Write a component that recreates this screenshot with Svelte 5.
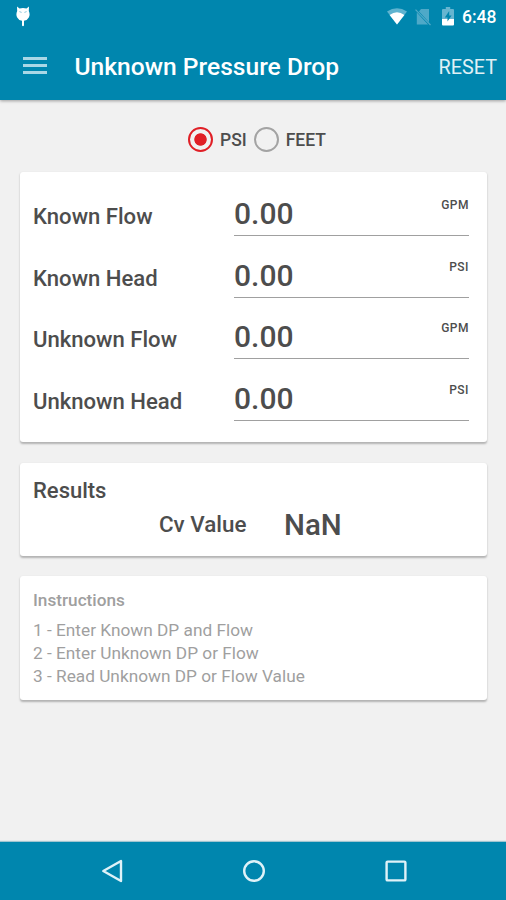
<script>
    let unit = 'PSI';
    let fields = [
        { label: 'Known Flow', value: '0.00', head: false },
        { label: 'Known Head', value: '0.00', head: true },
        { label: 'Unknown Flow', value: '0.00', head: false },
        { label: 'Unknown Head', value: '0.00', head: true }
    ];

    const steps = [
        '1 - Enter Known DP and Flow',
        '2 - Enter Unknown DP or Flow',
        '3 - Read Unknown DP or Flow Value'
    ];

    // 1 psi = 2.31 ft of water
    $: head = parseFloat(fields[1].value) / (unit === 'FEET' ? 2.31 : 1);
    $: cv = (parseFloat(fields[0].value) / Math.sqrt(head)).toFixed(2);

    function reset() {
        fields = fields.map((f) => ({ ...f, value: '0.00' }));
    }
</script>

<div class="screen">
    <header>
        <div class="status">
            <svg class="bug" width="14" height="21" viewBox="0 0 14 21">
                <path d="M1 0.5 L3.5 2.6 Q7 1.4 10.5 2.6 L13 0.5 L12.8 5 Q14.4 8.5 12.8 11.5 Q11.3 14.4 8 14.8 V19.5 Q7 21 6 19.5 V14.8 Q2.7 14.4 1.2 11.5 Q-0.4 8.5 1.2 5 Z" fill="#fff" />
                <path d="M3.4 5.6 L5.6 6.4 M10.6 5.6 L8.4 6.4" stroke="#7fc0d6" stroke-width="0.9" />
            </svg>
            <svg class="wifi" width="20" height="17" viewBox="0 0 20 17">
                <path d="M0 3.6 Q10 -3 20 3.6 L10 16.5 Z" fill="#5fb3cf" />
                <path d="M2.6 6.9 Q10 1.6 17.4 6.9 L10 16.5 Z" fill="#fff" />
            </svg>
            <svg class="sim" width="16" height="18" viewBox="0 0 16 18">
                <path d="M6 1 H14 V14.2 L4 3.4 Z M1.8 4.6 L13 16.4 H1.8 Z" fill="#4ea9c8" />
                <path d="M0.5 1.6 L15.5 17" stroke="#4ea9c8" stroke-width="1.2" />
            </svg>
            <svg class="battery" width="12" height="19" viewBox="0 0 12 19">
                <path d="M3.8 0 H8.2 V2 H11 Q12 2 12 3 V12 H0 V3 Q0 2 1 2 H3.8 Z" fill="#66b5d0" />
                <path d="M0 12 H12 V17.5 Q12 18.5 11 18.5 H1 Q0 18.5 0 17.5 Z" fill="#fff" />
                <path d="M7.2 4 L2.8 10.6 H5.5 V14.5 L9.6 8.5 H7.2 Z" fill="#0086ae" />
            </svg>
            <span class="clock">6:48</span>
        </div>
        <div class="toolbar">
            <button class="menu" aria-label="Menu"><i></i><i></i><i></i></button>
            <h1>Unknown Pressure Drop</h1>
            <button class="reset" on:click={reset}>RESET</button>
        </div>
    </header>

    <main>
        <div class="units">
            {#each ['PSI', 'FEET'] as u}
                <label>
                    <input type="radio" name="unit" value={u} bind:group={unit} />
                    <span>{u}</span>
                </label>
            {/each}
        </div>

        <section class="card inputs">
            {#each fields as field}
                <label class="row">
                    <span class="name">{field.label}</span>
                    <span class="entry">
                        <input type="text" bind:value={field.value} />
                        <small>{field.head ? unit : 'GPM'}</small>
                    </span>
                </label>
            {/each}
        </section>

        <section class="card results">
            <h2>Results</h2>
            <div class="cv">
                <span>Cv Value</span>
                <strong>{cv}</strong>
            </div>
        </section>

        <section class="card instructions">
            <h3>Instructions</h3>
            {#each steps as step}
                <p>{step}</p>
            {/each}
        </section>
    </main>

    <nav>
        <svg width="22" height="24" viewBox="0 0 22 24">
            <path d="M20 2 V22 L2.3 12 Z" />
        </svg>
        <svg width="24" height="24" viewBox="0 0 24 24">
            <circle cx="12" cy="12" r="9.8" />
        </svg>
        <svg width="22" height="22" viewBox="0 0 22 22">
            <rect x="1.6" y="1.6" width="18.8" height="18.8" rx="1" />
        </svg>
    </nav>
</div>

<style>
    :global(body) {
        background: #f1f1f1;
    }

    .screen {
        display: flex;
        flex-direction: column;
        height: 900px;
        box-sizing: border-box;
        overflow: hidden;
        font-family: Roboto, sans-serif;
        font-weight: 500;
        color: #4d4d4d;
    }

    h1, h2, h3, p {
        margin: 0;
    }

    button {
        border: none;
        background: none;
        padding: 0;
        font-family: inherit;
    }

    header {
        height: 100px;
        background: #0086ae;
        color: #fff;
        box-shadow: 0 1px 3px rgba(0, 0, 0, 0.35);
    }

    .status {
        height: 33px;
        display: flex;
        align-items: center;
        padding: 0 10px 0 16px;
    }

    .bug {
        margin-right: auto;
    }

    .sim {
        margin-left: 8px;
    }

    .battery {
        margin-left: 11px;
        margin-top: -1px;
    }

    .clock {
        margin-left: 8px;
        width: 34px;
        font-size: 17.5px;
        white-space: nowrap;
    }

    .toolbar {
        height: 67px;
        display: flex;
        align-items: center;
        padding: 0 9px 0 23px;
    }

    .menu {
        display: flex;
        flex-direction: column;
        gap: 4px;
        width: 24px;
        margin-right: 27.5px;
        margin-top: -3px;
    }

    .menu i {
        height: 3px;
        background: #a9d7e6;
    }

    h1 {
        font-size: 24.6px;
        font-weight: 500;
        white-space: nowrap;
    }

    .reset {
        margin: 2px 0 0 auto;
        font-size: 19.8px;
        color: #e0f1f6;
    }

    main {
        flex: 1;
        padding: 0 19px 0 20px;
    }

    .units {
        display: flex;
        justify-content: center;
        gap: 7px;
        height: 72px;
        padding: 7px 0 0 7px;
        box-sizing: border-box;
    }

    .units label {
        display: flex;
        align-items: center;
        gap: 7px;
        font-size: 17.5px;
    }

    .units span {
        padding-top: 1px;
    }

    .units input {
        appearance: none;
        width: 25px;
        height: 25px;
        margin: 0;
        border: 2.5px solid #a3a3a3;
        border-radius: 50%;
    }

    .units input:checked {
        border-color: #e01f26;
        background: radial-gradient(circle, #e01f26 5.8px, transparent 6.6px);
    }

    .card {
        background: #fff;
        border-radius: 3px;
        box-shadow: 0 1.5px 2px rgba(0, 0, 0, 0.26);
        box-sizing: border-box;
        padding: 0 13px;
    }

    .inputs {
        height: 270px;
        padding-top: 2.8px;
        padding-right: 18px;
        margin-bottom: 20.5px;
    }

    .row {
        display: flex;
        align-items: flex-end;
        height: 61.5px;
    }

    .name {
        flex: none;
        width: 201px;
        font-size: 22.1px;
        line-height: 26px;
        padding-bottom: 7px;
    }

    .entry {
        flex: 1;
        min-width: 0;
        display: flex;
        height: 45px;
        border-bottom: 1.5px solid #a0a0a0;
    }

    .entry input {
        flex: 1;
        min-width: 0;
        border: none;
        outline: none;
        padding: 2px 0 0;
        background: transparent;
        color: inherit;
        font: 500 30px Roboto, sans-serif;
    }

    small {
        font-size: 12px;
        letter-spacing: 0.5px;
        line-height: 14px;
        padding-top: 8px;
    }

    .results {
        height: 93.5px;
        padding-top: 14px;
        margin-bottom: 19.5px;
    }

    h2 {
        font-size: 22px;
        font-weight: 500;
        line-height: 28px;
    }

    .cv {
        display: flex;
        align-items: center;
        margin-top: -2px;
        padding-left: 126px;
        font-size: 22.4px;
        line-height: 40px;
    }

    .cv strong {
        margin: 2px 0 0 37.5px;
        font-size: 29.5px;
        font-weight: 500;
    }

    .instructions {
        height: 124px;
        padding-top: 14px;
        color: #9f9f9f;
    }

    h3 {
        font-size: 17.2px;
        font-weight: 500;
        line-height: 20px;
        margin-bottom: 9px;
    }

    p {
        font-size: 17.25px;
        font-weight: 400;
        line-height: 23.3px;
    }

    nav {
        height: 58px;
        display: flex;
        justify-content: space-between;
        align-items: center;
        padding: 0 99px 0 101px;
        background: #0086ae;
        box-shadow: 0 -1px 1px #9fc5d1;
        box-sizing: border-box;
    }

    nav svg {
        fill: none;
        stroke: #dff2f8;
        stroke-width: 2.4;
        stroke-linejoin: round;
    }
</style>
